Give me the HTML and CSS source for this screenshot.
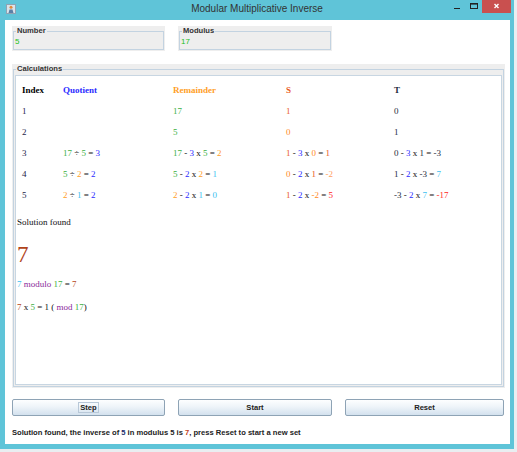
FILE: index.html
```html
<!DOCTYPE html>
<html>
<head>
<meta charset="utf-8">
<link rel="stylesheet" href="styles.css">
</head>
<body>
<div class="window">
  <div class="titlebar">
    <div class="tb-left">
      <svg class="appicon" viewBox="0 0 10 10" width="10" height="10">
        <rect x="0.5" y="0.5" width="9" height="9" fill="#d9e3ea" stroke="#8fa3b3"/>
        <circle cx="5" cy="3.2" r="1.5" fill="#e08a3c"/>
        <path d="M2.5 9 L3.5 5.5 L6.5 5.5 L7.5 9 Z" fill="#5b7fa6"/>
      </svg>
    </div>
    <div class="title">Modular Multiplicative Inverse</div>
    <div class="tb-right">
      <svg class="ctl min" viewBox="0 0 12 13" width="12" height="13"><line x1="2" y1="8.5" x2="8" y2="8.5" stroke="#222" stroke-width="1"/></svg>
      <svg class="ctl max" viewBox="0 0 18 13" width="18" height="13"><rect x="6.5" y="3.5" width="7" height="5" fill="none" stroke="#222" stroke-width="1"/><line x1="6.5" y1="4" x2="13.5" y2="4" stroke="#222" stroke-width="1.2"/></svg>
      <svg class="ctl close" viewBox="0 0 29 13" width="29" height="13"><rect width="29" height="13" fill="#c9504f"/><path d="M12.5 4 L16.5 8 M16.5 4 L12.5 8" stroke="#fff" stroke-width="1.4"/></svg>
    </div>
  </div>
  <div class="client">
    <div class="top">
      <div class="box num">
        <fieldset><legend>Number</legend><div class="val">5</div></fieldset>
      </div>
      <div class="box mod">
        <fieldset><legend>Modulus</legend><div class="val">17</div></fieldset>
      </div>
    </div>
    <div class="box calc">
      <fieldset>
        <legend>Calculations</legend>
        <div class="pane">
          <div class="grid">
            <div class="h k">Index</div><div class="h b">Quotient</div><div class="h o">Remainder</div><div class="h s">S</div><div class="h t">T</div>

            <div class="ix">1</div><div></div><div class="g">17</div><div class="s">1</div><div class="t">0</div>

            <div class="ix">2</div><div></div><div class="g">5</div><div class="o2">0</div><div class="t">1</div>

            <div class="ix">3</div>
            <div><span class="g">17</span> ÷ <span class="g">5</span> = <span class="b">3</span></div>
            <div><span class="g">17</span> - <span class="b">3</span> x <span class="g">5</span> = <span class="o">2</span></div>
            <div><span class="s">1</span> - <span class="b">3</span> x <span class="o2">0</span> = <span class="s">1</span></div>
            <div><span class="t">0</span> - <span class="b">3</span> x <span class="t">1</span> = <span class="t">-3</span></div>

            <div class="ix">4</div>
            <div><span class="g">5</span> ÷ <span class="o">2</span> = <span class="b">2</span></div>
            <div><span class="g">5</span> - <span class="b">2</span> x <span class="o">2</span> = <span class="lb">1</span></div>
            <div><span class="o2">0</span> - <span class="b">2</span> x <span class="s">1</span> = <span class="o3">-2</span></div>
            <div><span class="t">1</span> - <span class="b">2</span> x <span class="t">-3</span> = <span class="lb">7</span></div>

            <div class="ix">5</div>
            <div><span class="o">2</span> ÷ <span class="lb">1</span> = <span class="b">2</span></div>
            <div><span class="o">2</span> - <span class="b">2</span> x <span class="lb">1</span> = <span class="lb">0</span></div>
            <div><span class="s">1</span> - <span class="b">2</span> x <span class="o2">-2</span> = <span class="r">5</span></div>
            <div><span class="t">-3</span> - <span class="b">2</span> x <span class="lb">7</span> = <span class="r">-17</span></div>
          </div>
          <div class="found">Solution found</div>
          <div class="big">7</div>
          <div class="eq1"><span class="lb">7</span> <span class="p">modulo</span> <span class="g">17</span> = <span class="br">7</span></div>
          <div class="eq2"><span class="br">7</span> x <span class="g">5</span> = 1 ( <span class="p">mod</span> <span class="g">17</span>)</div>
        </div>
      </fieldset>
    </div>
    <div class="buttons">
      <button class="btn w1"><span class="focus">Step</span></button>
      <button class="btn w2">Start</button>
      <button class="btn w3">Reset</button>
    </div>
    <div class="status">Solution found, the inverse of <span class="sv5">5</span> in modulus 5 is <span class="sv7">7</span>, press Reset to start a new set</div>
  </div>
</div>
</body>
</html>
```

FILE: styles.css
```css
body {
  margin: 0;
  background: #e9eef1;
  font-family: "Liberation Sans", Arial, sans-serif;
}

.window {
  width: 514px;
  height: 449px;
  background: #5fc4d8;
  display: flex;
  flex-direction: column;
}

.titlebar {
  height: 20px;
  flex: none;
  display: grid;
  grid-template-columns: 1fr auto 1fr;
  align-items: start;
}

.tb-left {
  padding: 4px 0 0 6px;
}

.appicon {
  display: block;
}

.title {
  font-size: 10px;
  line-height: 12px;
  color: #333;
  padding-top: 3px;
}

.tb-right {
  display: flex;
  justify-content: flex-end;
  padding-right: 3px;
}

.ctl {
  display: block;
}

.client {
  flex: 1;
  margin: 0 4px 5px 5px;
  background: #fff;
  padding: 6px 5px 0 7px;
}

.top {
  display: flex;
  gap: 13px;
}

.box {
  background: #eeeeee;
  box-sizing: border-box;
  padding: 0 1px 1px 1px;
}

.box.num {
  width: 153px;
  height: 25px;
}

.box.mod {
  width: 154px;
  height: 25px;
}

fieldset {
  margin: 0;
  border: 1px solid #c3d3e1;
  padding: 0 1px 1px;
  height: 100%;
  box-sizing: border-box;
  min-width: 0;
}

legend {
  padding: 0 1px;
  margin-left: 1px;
  font-weight: bold;
  font-size: 7.6px;
  line-height: 10px;
  color: #333;
}

.val {
  font-size: 8px;
  line-height: 10px;
  color: #20c020;
  padding-top: 1px;
}

.box.calc {
  width: 493px;
  height: 324px;
  margin-top: 13px;
}

.pane {
  border: 1px solid #c8d6e2;
  background: #fff;
  height: 310px;
  box-sizing: border-box;
  margin-top: 1px;
  padding: 3px 1px 0 1px;
  font-family: "Liberation Serif", "Times New Roman", serif;
  font-size: 9px;
  color: #111;
}

.grid {
  display: grid;
  grid-template-columns: 41px 110px 113px 108px 1fr;
  grid-auto-rows: 21px;
  align-items: center;
  margin-left: 5px;
  line-height: 12px;
}

.h { font-weight: bold; }
.k { color: #000; }
.ix { color: #23234a; }
.t { color: #1e2c3c; }
.b { color: #2b2bff; }
.o { color: #ffa028; }
.o2 { color: #ff8a26; }
.o3 { color: #ffa060; }
.s { color: #ea5a22; }
.g { color: #3cb043; }
.lb { color: #3cbfef; }
.r { color: #ff1c1c; }
.br { color: #b5461b; }
.p { color: #8a2a9a; }

.found {
  margin-top: 11px;
  line-height: 12px;
}

.big {
  margin-top: 14px;
  font-size: 23px;
  line-height: 26px;
  color: #b0441a;
}

.eq1 {
  margin-top: 10px;
  line-height: 12px;
}

.eq2 {
  margin-top: 11px;
  line-height: 12px;
}

.buttons {
  display: flex;
  gap: 13px;
  margin-top: 11px;
}

.btn {
  height: 17px;
  box-sizing: border-box;
  border: 1px solid #8ea3b5;
  border-radius: 2px;
  background: linear-gradient(#fdfeff, #eef4f9 45%, #d3e1ee);
  font-family: "Liberation Sans", Arial, sans-serif;
  font-weight: bold;
  font-size: 7.6px;
  line-height: 13px;
  color: #222;
  text-align: center;
  padding: 0;
}

.w1 { width: 153px; }
.w2 { width: 154px; }
.w3 { width: 159px; }

.focus {
  border: 1px solid #b8c8d8;
  padding: 0 1px;
}

.status {
  margin-top: 12px;
  font-weight: bold;
  font-size: 7.6px;
  line-height: 10px;
  color: #222;
}

.sv5 { color: #1c2c6c; }
.sv7 { color: #c0401a; }
```
